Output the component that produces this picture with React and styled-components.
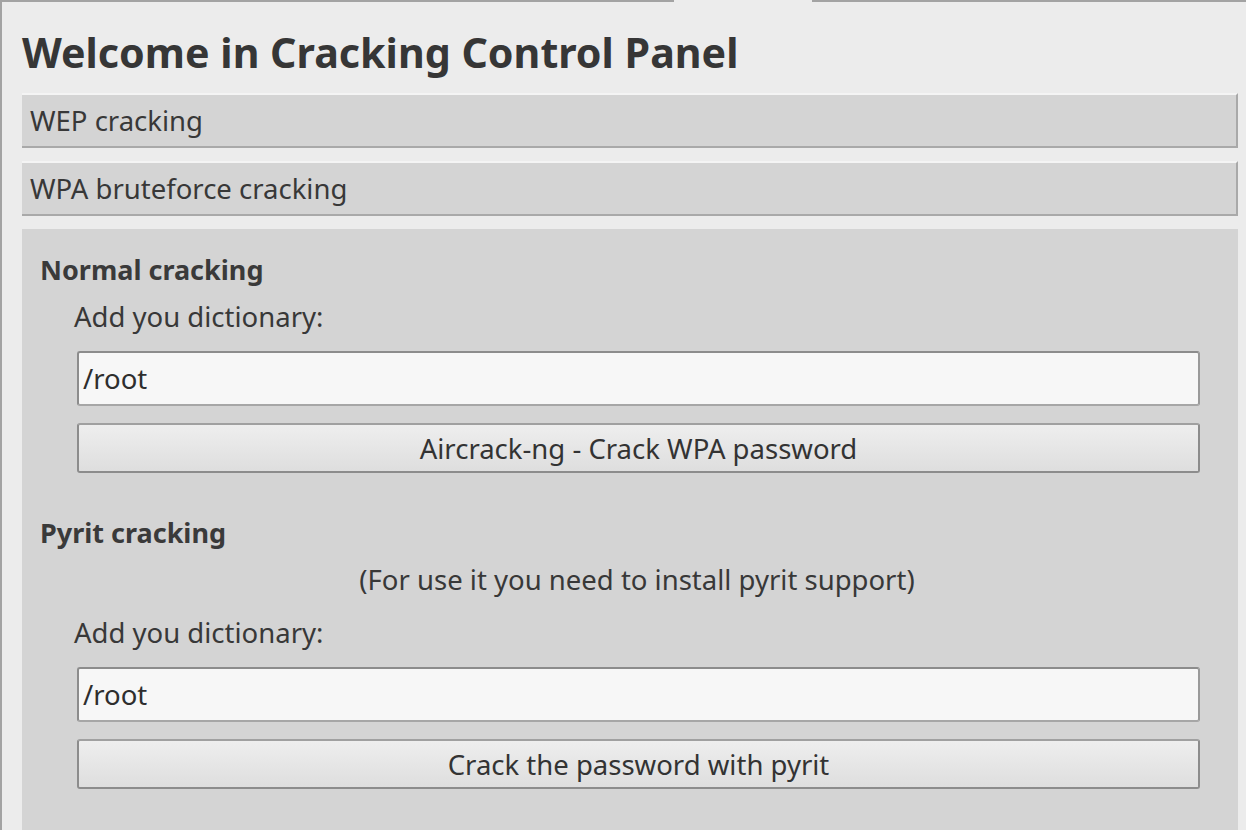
import React from 'react';
import styled, { createGlobalStyle } from 'styled-components';

const GlobalStyle = createGlobalStyle`
  html, body {
    margin: 0;
    padding: 0;
    background: #ececec;
  }
  body {
    font-family: "Noto Sans", "Open Sans", sans-serif;
    color: #383838;
  }
`;

const Window = styled.div`
  width: 1246px;
  height: 830px;
  box-sizing: border-box;
  border-left: 2px solid #a3a3a3;
  background: #ececec;
  overflow: hidden;
  display: flex;
  flex-direction: column;
`;

const TopEdge = styled.div`
  display: flex;
  height: 2px;
  flex-shrink: 0;
`;

const EdgeLine = styled.div`
  height: 2px;
  background: ${(p) => (p.$gap ? 'transparent' : '#a3a3a3')};
  width: ${(p) => p.$w || 'auto'};
  flex: ${(p) => (p.$w ? 'none' : '1')};
`;

const Body = styled.div`
  flex: 1;
  display: flex;
  flex-direction: column;
  padding: 0 8px 0 20px;
`;

const Title = styled.h1`
  margin: 24px 0 15px 0;
  font-size: 41.2px;
  line-height: 52px;
  font-weight: 700;
  color: #363636;
`;

const Expander = styled.div`
  height: 55px;
  box-sizing: border-box;
  background: #d4d4d4;
  border-top: 2px solid #f4f4f4;
  border-right: 2px solid #a9a9a9;
  border-bottom: 2px solid #a9a9a9;
  display: flex;
  align-items: center;
  padding-left: 8px;
  font-size: 27.5px;
  margin-bottom: 13px;
`;

const Panel = styled.div`
  flex: 1;
  background: #d4d4d4;
  padding: 23px 38px 0 18px;
  display: flex;
  flex-direction: column;
`;

const SectionTitle = styled.div`
  font-size: 27px;
  font-weight: 700;
  line-height: 36px;
  color: #3a3a3a;
  margin-top: ${(p) => p.$top || 0}px;
`;

const Label = styled.div`
  font-size: 27.5px;
  line-height: 36px;
  padding-left: 34px;
  text-align: ${(p) => (p.$center ? 'center' : 'left')};
  margin-top: ${(p) => p.$top || 0}px;
`;

const Entry = styled.div`
  margin: 16px 0 0 37px;
  height: 55px;
  box-sizing: border-box;
  background: #f7f7f7;
  border: 2px solid #8c8c8c;
  border-right-color: #9a9a9a;
  border-bottom-color: #a6a6a6;
  border-radius: 3px;
  display: flex;
  align-items: center;
  padding-left: 4px;
  font-size: 27.5px;
  color: #2e2e2e;
`;

const Button = styled.div`
  margin: 17px 0 0 37px;
  height: 50px;
  box-sizing: border-box;
  background: linear-gradient(#eeeeee, #dedede);
  border: 2px solid #8c8c8c;
  border-top-color: #a0a0a0;
  border-radius: 3px;
  display: flex;
  align-items: center;
  justify-content: center;
  font-size: 27.5px;
  color: #333;
`;

export default function App() {
  return (
    <>
      <GlobalStyle />
      <Window>
        <TopEdge>
          <EdgeLine $w="672px" />
          <EdgeLine $gap $w="138px" />
          <EdgeLine />
        </TopEdge>
        <Body>
          <Title>Welcome in Cracking Control Panel</Title>
          <Expander>WEP cracking</Expander>
          <Expander>WPA bruteforce cracking</Expander>
          <Panel>
            <SectionTitle>Normal cracking</SectionTitle>
            <Label $top={11}>Add you dictionary:</Label>
            <Entry>/root</Entry>
            <Button>Aircrack-ng - Crack WPA password</Button>
            <SectionTitle $top={42}>Pyrit cracking</SectionTitle>
            <Label $center $top={11}>(For use it you need to install pyrit support)</Label>
            <Label $top={17}>Add you dictionary:</Label>
            <Entry>/root</Entry>
            <Button>Crack the password with pyrit</Button>
          </Panel>
        </Body>
      </Window>
    </>
  );
}
